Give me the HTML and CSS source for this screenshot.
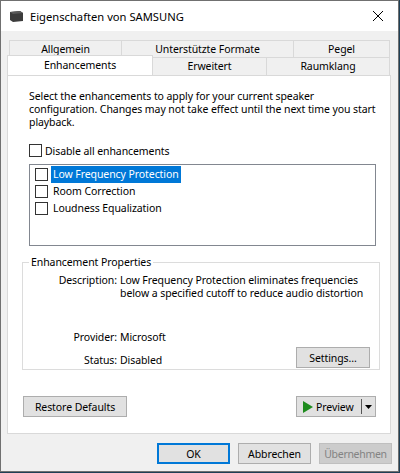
FILE: index.html
```html
<!DOCTYPE html>
<html>
<head>
<meta charset="utf-8">
<link rel="stylesheet" href="styles.css">
</head>
<body>
<div class="window">
  <div class="titlebar">
    <svg class="appicon" width="14" height="11" viewBox="0 0 14 11"><polygon points="0,1 10,0 13,2 13,10 3,11 0,9" fill="#3c3c3c"/><polygon points="0,1 10,0 13,2 3,3" fill="#5a5a5a"/></svg>
    <span class="title">Eigenschaften von SAMSUNG</span>
    <svg class="close" width="12" height="12" viewBox="0 0 12 12"><path d="M1 1 L11 11 M11 1 L1 11" stroke="#000" stroke-width="1"/></svg>
  </div>
  <div class="client">
    <div class="tabs">
      <div class="tabrow back">
        <div class="tab t-allg">Allgemein</div>
        <div class="tab t-form">Unterstützte Formate</div>
        <div class="tab t-pegel">Pegel</div>
      </div>
      <div class="tabrow front">
        <div class="tab t-enh selected">Enhancements</div>
        <div class="tab t-erw">Erweitert</div>
        <div class="tab t-raum">Raumklang</div>
      </div>
    </div>
    <div class="panel">
      <p class="intro">Select the enhancements to apply for your current speaker configuration. Changes may not take effect until the next time you start playback.</p>
      <label class="check disable"><span class="box"></span><span>Disable all enhancements</span></label>
      <div class="listbox">
        <div class="item"><span class="box"></span><span class="itext sel">Low Frequency Protection</span></div>
        <div class="item"><span class="box"></span><span class="itext">Room Correction</span></div>
        <div class="item"><span class="box"></span><span class="itext">Loudness Equalization</span></div>
      </div>
      <fieldset class="group">
        <legend>Enhancement Properties</legend>
        <div class="prow desc"><span class="lbl">Description:</span><span class="val">Low Frequency Protection eliminates frequencies below a specified cutoff to reduce audio distortion</span></div>
        <div class="prow prov"><span class="lbl">Provider:</span><span class="val">Microsoft</span></div>
        <div class="prow stat"><span class="lbl">Status:</span><span class="val">Disabled</span><button class="btn settings">Settings...</button></div>
      </fieldset>
      <div class="panelbtns">
        <button class="btn restore">Restore Defaults</button>
        <div class="btn preview">
          <svg class="play" width="10" height="12" viewBox="0 0 10 12"><polygon points="0,0 10,6 0,12" fill="#1e8c1e"/></svg>
          <span class="ptext">Preview</span>
          <span class="sep"></span>
          <svg class="arrow" width="7" height="4" viewBox="0 0 7 4"><polygon points="0,0 7,0 3.5,4" fill="#000"/></svg>
        </div>
      </div>
    </div>
    <div class="dlgbtns">
      <button class="btn ok">OK</button>
      <button class="btn cancel">Abbrechen</button>
      <button class="btn apply" disabled>Übernehmen</button>
    </div>
  </div>
</div>
</body>
</html>
```
FILE: styles.css
```css
html, body {
  margin: 0;
  padding: 0;
}
body {
  width: 400px;
  height: 473px;
  overflow: hidden;
  background: #1f3f55;
  font-family: "Noto Sans", "Open Sans", sans-serif;
  font-size: 10.5px;
  letter-spacing: -0.08px;
  color: #000;
}
.window {
  width: 397px;
  height: 470px;
  border: 1px solid #707070;
  background: #f0f0f0;
  display: flex;
  flex-direction: column;
}
.titlebar {
  height: 30px;
  background: #fff;
  display: flex;
  align-items: center;
  flex: none;
}
.appicon {
  margin-left: 9px;
  margin-right: 6px;
}
.title {
  font-size: 11.2px;
  letter-spacing: 0;
  flex: 1;
}
.close {
  margin-right: 14px;
}
.client {
  flex: 1;
  display: flex;
  flex-direction: column;
  padding: 9px 0 0 6px;
}
.tabs {
  width: 383px;
}
.tabrow {
  display: flex;
  height: 17px;
}
.tabrow.back {
  padding-left: 2px;
}
.tab {
  box-sizing: border-box;
  border: 1px solid #d9d9d9;
  border-bottom: none;
  background: #f0f0f0;
  text-align: center;
  line-height: 17px;
  margin-right: -1px;
}
.t-allg { width: 113px; }
.t-form { width: 173px; }
.t-pegel { width: 97px; }
.tabrow.front {
  height: 18px;
}
.t-enh { width: 146px; }
.t-erw { width: 115px; }
.t-raum { width: 124px; }
.tab.selected {
  background: #fff;
  height: 20px;
  margin-top: -2px;
  position: relative;
  z-index: 1;
  line-height: 19px;
}
.panel {
  box-sizing: border-box;
  width: 384px;
  height: 359px;
  background: #fff;
  border: 1px solid #d9d9d9;
  padding: 14px 0 0 21px;
  display: flex;
  flex-direction: column;
}
.intro {
  margin: 0;
  line-height: 13px;
  width: 350px;
}
.check {
  display: flex;
  align-items: center;
  margin-top: 15px;
  height: 13px;
}
.box {
  box-sizing: border-box;
  width: 13px;
  height: 13px;
  border: 1px solid #333;
  background: #fff;
  flex: none;
}
.check .box {
  margin-right: 3px;
}
.listbox {
  box-sizing: border-box;
  margin-top: 7px;
  width: 347px;
  height: 82px;
  border: 1px solid #828790;
  padding: 1px 0 0 5px;
}
.item {
  display: flex;
  align-items: center;
  height: 17px;
}
.item .box {
  margin-right: 3px;
}
.itext {
  padding: 0 2px;
  line-height: 17px;
}
.itext.sel {
  background: #0078d7;
  color: #fff;
}
.group {
  box-sizing: border-box;
  margin: 10px 0 0 -7px;
  width: 358px;
  height: 114px;
  border: 1px solid #dcdcdc;
  padding: 5px 9px 0 0;
  min-width: 0;
}
.group legend {
  padding: 0 2px;
  margin-left: 6px;
  line-height: 13px;
}
.prow {
  display: flex;
  line-height: 13px;
}
.lbl {
  width: 94px;
  text-align: right;
  flex: none;
  margin-right: 3px;
}
.val {
  flex: 1;
}
.prov {
  margin-top: 31px;
}
.stat {
  margin-top: 3px;
  align-items: flex-end;
}
.stat .lbl, .stat .val {
  padding-bottom: 1px;
}
.btn {
  box-sizing: border-box;
  font-family: inherit;
  font-size: 10.5px;
  letter-spacing: -0.08px;
  color: #000;
  background: #e1e1e1;
  border: 1px solid #adadad;
  border-radius: 0;
  padding: 0;
  height: 21px;
  margin: 0;
}
.settings {
  width: 74px;
  flex: none;
}
.panelbtns {
  display: flex;
  justify-content: space-between;
  margin-top: 26px;
  margin-left: -6px;
  width: 353px;
}
.restore {
  width: 104px;
}
.preview {
  width: 80px;
  display: flex;
  align-items: center;
  padding-left: 6px;
}
.play {
  margin-right: 3px;
}
.ptext {
  flex: 1;
}
.sep {
  width: 1px;
  height: 15px;
  background: #555;
  margin-right: 3px;
}
.arrow {
  margin-right: 3px;
}
.dlgbtns {
  display: flex;
  margin-top: 9px;
  padding-left: 150px;
  gap: 8px;
}
.dlgbtns .btn {
  width: 73px;
}
.ok {
  border: 2px solid #0078d7;
}
.apply {
  background: #cccccc;
  border-color: #bfbfbf;
  color: #838383;
  letter-spacing: -0.3px;
}
```
